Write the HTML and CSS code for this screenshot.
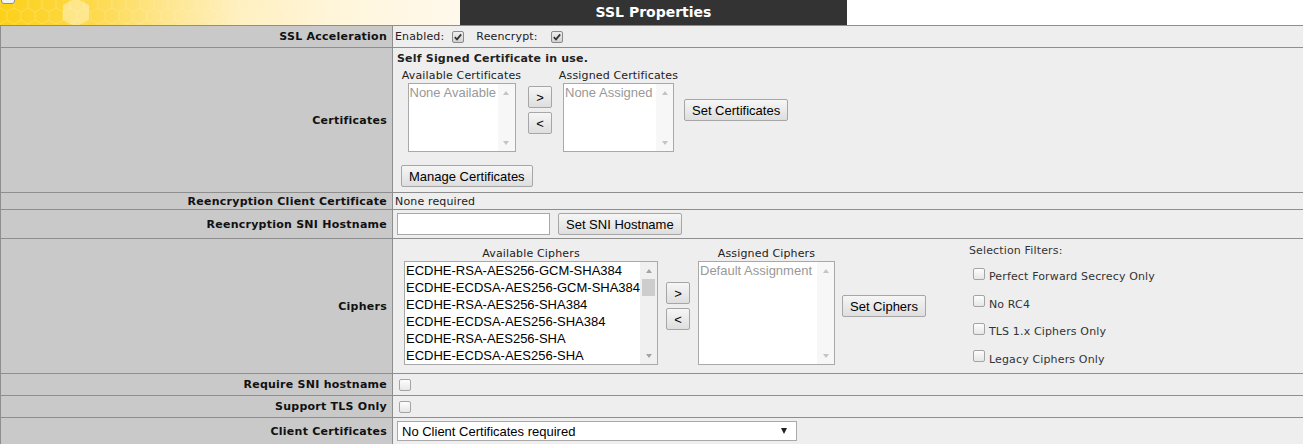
FILE: index.html
```html
<!DOCTYPE html>
<html lang="en">
<head>
<meta charset="utf-8">
<title>SSL Properties</title>
<link rel="stylesheet" href="styles.css">
</head>
<body>
<header class="topbar">
  <div class="brand">
    <span class="tab-stub"></span>
    <svg class="honeycomb" width="460" height="25" viewBox="0 0 460 25" aria-hidden="true">
      <defs>
        <pattern id="hex" width="14" height="24" patternUnits="userSpaceOnUse" x="0" y="-4">
          <path d="M7 0L14 4V12L7 16L0 12V4Z M7 16V24" fill="none" stroke="#fff" stroke-width="1"/>
        </pattern>
        <linearGradient id="fade" x1="0" x2="1" y1="0" y2="0">
          <stop offset="0" stop-color="#fff" stop-opacity="0.22"/>
          <stop offset="0.5" stop-color="#fff" stop-opacity="0.14"/>
          <stop offset="1" stop-color="#fff" stop-opacity="0.08"/>
        </linearGradient>
        <mask id="fademask"><rect width="460" height="25" fill="url(#fade)"/></mask>
      </defs>
      <rect width="460" height="25" fill="url(#hex)" mask="url(#fademask)"/>
      <path d="M76 -2L89 5V19.5L76 27L63 19.5V5Z" fill="#fff" opacity="0.38"/>
    </svg>
  </div>
  <h1 class="title">SSL Properties</h1>
  <div class="blank"></div>
</header>

<main class="props">
  <div class="lbl">SSL Acceleration</div>
  <div class="val">
    <span class="flag">Enabled:
      <span class="cb cb-on"><svg viewBox="0 0 10 10"><path d="M1.8 5.2L4 7.4L8.2 2.4"/></svg></span>
    </span>
    <span class="flag flag-second">Reencrypt:
      <span class="cb cb-on"><svg viewBox="0 0 10 10"><path d="M1.8 5.2L4 7.4L8.2 2.4"/></svg></span>
    </span>
  </div>

  <div class="lbl">Certificates</div>
  <div class="val val-cert">
    <div class="notice">Self Signed Certificate in use.</div>
    <div class="picker">
      <div class="pick-col">
        <div class="cap">Available Certificates</div>
        <div class="listbox cert-list avail-cert">
          <div class="items empty">None Available</div>
          <div class="sbar"><span class="arr up"></span><span class="arr down"></span></div>
        </div>
      </div>
      <div class="shuttle">
        <button class="btn mini-btn" type="button">&gt;</button>
        <button class="btn mini-btn" type="button">&lt;</button>
      </div>
      <div class="pick-col">
        <div class="cap">Assigned Certificates</div>
        <div class="listbox cert-list assigned-cert">
          <div class="items empty">None Assigned</div>
          <div class="sbar"><span class="arr up"></span><span class="arr down"></span></div>
        </div>
      </div>
      <button class="btn set-btn" type="button">Set Certificates</button>
    </div>
    <button class="btn manage-btn" type="button">Manage Certificates</button>
  </div>

  <div class="lbl">Reencryption Client Certificate</div>
  <div class="val">None required</div>

  <div class="lbl">Reencryption SNI Hostname</div>
  <div class="val">
    <input class="text-in" type="text" aria-label="Reencryption SNI Hostname">
    <button class="btn sni-btn" type="button">Set SNI Hostname</button>
  </div>

  <div class="lbl">Ciphers</div>
  <div class="val val-ciphers">
    <div class="cipher-col">
      <div class="cap">Available Ciphers</div>
      <div class="listbox cipher-list avail-ciphers">
        <div class="items">
          <div>ECDHE-RSA-AES256-GCM-SHA384</div>
          <div>ECDHE-ECDSA-AES256-GCM-SHA384</div>
          <div>ECDHE-RSA-AES256-SHA384</div>
          <div>ECDHE-ECDSA-AES256-SHA384</div>
          <div>ECDHE-RSA-AES256-SHA</div>
          <div>ECDHE-ECDSA-AES256-SHA</div>
        </div>
        <div class="sbar active"><span class="arr up"></span><span class="thumb"></span><span class="track"></span><span class="arr down"></span></div>
      </div>
    </div>
    <div class="shuttle cipher-shuttle">
      <button class="btn mini-btn" type="button">&gt;</button>
      <button class="btn mini-btn" type="button">&lt;</button>
    </div>
    <div class="cipher-col">
      <div class="cap">Assigned Ciphers</div>
      <div class="listbox cipher-list assigned-ciphers">
        <div class="items empty">Default Assignment</div>
        <div class="sbar"><span class="arr up"></span><span class="arr down"></span></div>
      </div>
    </div>
    <button class="btn cipher-set" type="button">Set Ciphers</button>
    <div class="filters">
      <div class="cap">Selection Filters:</div>
      <label class="filter"><span class="cb"></span>Perfect Forward Secrecy Only</label>
      <label class="filter"><span class="cb"></span>No RC4</label>
      <label class="filter"><span class="cb"></span>TLS 1.x Ciphers Only</label>
      <label class="filter"><span class="cb"></span>Legacy Ciphers Only</label>
    </div>
  </div>

  <div class="lbl">Require SNI hostname</div>
  <div class="val"><span class="cb cb-solo"></span></div>

  <div class="lbl">Support TLS Only</div>
  <div class="val"><span class="cb cb-solo"></span></div>

  <div class="lbl">Client Certificates</div>
  <div class="val">
    <div class="dropdown">No Client Certificates required<span class="caret"></span></div>
  </div>
</main>
</body>
</html>
```

FILE: styles.css
```css
* { box-sizing: border-box; }

body {
  margin: 0;
  background: #fff;
  font-family: "DejaVu Sans", Verdana, sans-serif;
  font-size: 11px;
  color: #222;
}

/* ---------- top bar ---------- */
.topbar {
  display: flex;
  height: 26px;
  border-bottom: 1px solid #8e8e8e;
}
.brand {
  position: relative;
  width: 460px;
  overflow: hidden;
  background: linear-gradient(90deg, #fcd118 0%, #fdd94a 20%, #fee58a 35%, #fff0c0 52%, #fff6dc 75%, #fff9ec 100%);
}
.honeycomb { display: block; }
.tab-stub {
  position: absolute;
  left: 1px;
  top: -10px;
  width: 14px;
  height: 14px;
  border: 1px solid #8f8f8f;
  border-radius: 3px;
  background: #f4f4f4;
}
.title {
  margin: 0;
  width: 387px;
  background: #333;
  color: #fff;
  font-size: 14px;
  font-weight: bold;
  line-height: 25px;
  text-align: center;
}
.blank { flex: 1; }

/* ---------- property grid ---------- */
.props {
  display: grid;
  grid-template-columns: 392px 1fr;
  grid-template-rows: 22px 145px 17px 29px 135px 22px 22px 27px;
  border-left: 1px solid #8e8e8e;
}
.lbl {
  display: flex;
  align-items: center;
  justify-content: flex-end;
  padding-right: 5px;
  background: #c9c9c9;
  border-right: 1px solid #8e8e8e;
  border-bottom: 1px solid #8e8e8e;
  font-weight: bold;
  letter-spacing: 0.25px;
  color: #111;
  white-space: nowrap;
}
.val {
  display: flex;
  align-items: center;
  min-width: 0;
  padding-left: 2px;
  background: #eee;
  border-bottom: 1px solid #8e8e8e;
  letter-spacing: 0.15px;
  white-space: nowrap;
}

/* checkboxes */
.cb {
  display: inline-flex;
  align-items: center;
  justify-content: center;
  flex: none;
  width: 12px;
  height: 12px;
  border: 1px solid #a4a4a4;
  border-radius: 2px;
  background: linear-gradient(#fdfdfd, #e6e6e6);
}
.cb-on {
  border-color: #8a8a8a;
  background: linear-gradient(#eeeeee, #d2d2d2);
}
.cb svg {
  width: 10px;
  height: 10px;
  fill: none;
  stroke: #333;
  stroke-width: 1.7;
}
.cb-solo { margin-left: 4px; }

.flag {
  display: inline-flex;
  align-items: center;
  gap: 8px;
}
.flag-second {
  margin-left: 12px;
  gap: 13px;
}

/* buttons and inputs */
.btn {
  height: 22px;
  padding: 0 7px;
  font-family: "Liberation Sans", Arial, sans-serif;
  font-size: 13px;
  letter-spacing: 0;
  color: #000;
  border: 1px solid #a6a6a6;
  border-radius: 2px;
  background: linear-gradient(#f6f6f6, #dedede);
  white-space: nowrap;
}
.mini-btn {
  width: 24px;
  padding: 0;
}
.text-in {
  width: 153px;
  height: 22px;
  margin: 0 0 0 2px;
  border: 1px solid #a9a9a9;
  background: #fff;
}
.sni-btn { margin-left: 8px; }

/* certificate picker */
.val-cert {
  display: block;
  padding: 4px 0 0 4px;
}
.notice {
  font-weight: bold;
  line-height: 14px;
  letter-spacing: 0.2px;
}
.picker {
  display: flex;
  align-items: center;
  margin: 2px 0 0 4px;
}
.pick-col {
  display: flex;
  flex-direction: column;
  align-items: center;
  width: 121px;
}
.cap {
  line-height: 15px;
  color: #222;
}
.shuttle {
  display: flex;
  flex-direction: column;
  gap: 4px;
  margin: 0 6px;
}
.set-btn { margin-left: 5px; }
.manage-btn { margin: 13px 0 0 4px; }

/* list boxes */
.listbox {
  display: flex;
  background: #fff;
  border: 1px solid #a9a9a9;
  font-family: "Liberation Sans", Arial, sans-serif;
  font-size: 13px;
  letter-spacing: 0;
  color: #000;
}
.listbox .items {
  flex: 1;
  min-width: 0;
  overflow: hidden;
  padding: 0 0 0 1px;
  line-height: 17px;
  white-space: nowrap;
}
.listbox .items.empty { color: #999; }
.cert-list { height: 69px; }
.avail-cert { width: 108px; }
.assigned-cert { width: 111px; }

.sbar {
  display: flex;
  flex-direction: column;
  justify-content: space-between;
  width: 17px;
  flex: none;
  background: #f7f7f7;
}
.arr {
  display: flex;
  align-items: center;
  justify-content: center;
  width: 17px;
  height: 17px;
}
.arr::before {
  content: "";
  border-left: 3.5px solid transparent;
  border-right: 3.5px solid transparent;
}
.arr.up::before { border-bottom: 4px solid #c4c4c4; }
.arr.down::before { border-top: 4px solid #c4c4c4; }
.sbar.active { background: #f0f0f0; justify-content: flex-start; }
.sbar.active .arr.up::before { border-bottom-color: #a3a3a3; }
.sbar.active .arr.down::before { border-top-color: #a3a3a3; }
.thumb {
  width: 13px;
  height: 17px;
  margin: 0 auto;
  background: #cdcdcd;
}
.track { flex: 1; }

/* ciphers */
.val-ciphers { padding-left: 11px; }
.cipher-col {
  display: flex;
  flex-direction: column;
  align-items: center;
}
.cipher-col .cap { line-height: 14px; }
.cipher-list { height: 104px; }
.avail-ciphers { width: 254px; }
.assigned-ciphers { width: 137px; }
.cipher-shuttle { margin: 0 8px; }
.cipher-set { margin-left: 7px; }

.filters {
  align-self: flex-start;
  margin: 5px 0 0 43px;
  color: #333;
}
.filters .cap {
  line-height: 14px;
  margin-bottom: 5px;
  color: #333;
}
.filter {
  display: flex;
  align-items: center;
  height: 27.5px;
  padding-left: 4px;
}
.filter .cb { margin: 0 4px 6px 0; }

/* dropdown */
.dropdown {
  display: flex;
  align-items: center;
  justify-content: space-between;
  width: 400px;
  height: 20px;
  margin-left: 2px;
  padding: 0 9px 0 4px;
  background: #fff;
  border: 1px solid #a9a9a9;
  font-family: "Liberation Sans", Arial, sans-serif;
  font-size: 13px;
  letter-spacing: 0;
  color: #000;
}
.caret {
  border-left: 3px solid transparent;
  border-right: 3px solid transparent;
  border-top: 6px solid #222;
}
```
